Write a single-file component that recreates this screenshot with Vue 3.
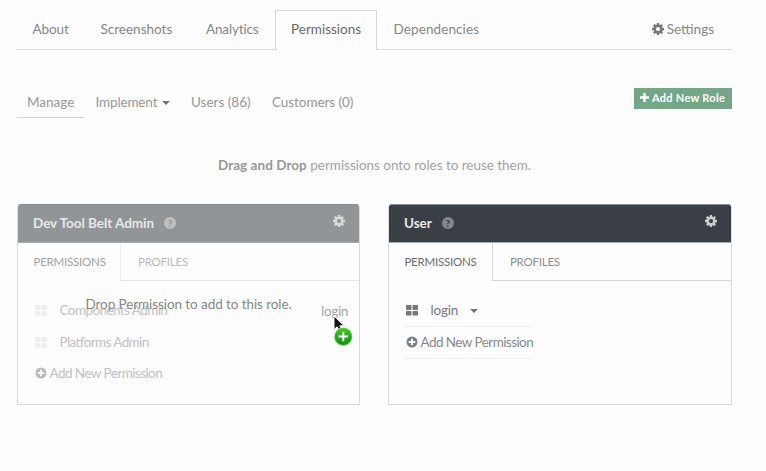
<script setup>
import { h } from 'vue'

const cogPath = 'M1024 896q0-106-75-181t-181-75-181 75-75 181 75 181 181 75 181-75 75-181zm512-109v222q0 12-8 23t-20 13l-185 28q-19 54-39 91 35 50 107 138 10 12 10 25t-9 23q-27 37-99 108t-94 71q-12 0-26-9l-138-108q-44 23-91 38-16 136-29 186-7 28-36 28h-222q-14 0-24.500-8.500t-11.500-21.500l-28-184q-49-16-90-37l-141 107q-10 9-25 9-14 0-25-11-126-114-165-168-7-10-7-23 0-12 8-23 15-21 51-66.500t54-70.500q-27-50-41-99l-183-27q-13-2-21-12.500t-8-23.500v-222q0-12 8-23t19-13l186-28q14-46 39-92-40-57-107-138-10-12-10-24 0-10 9-23 26-36 98.500-107.500t94.500-71.500q13 0 26 10l138 107q44-23 91-38 16-136 29-186 7-28 36-28h222q14 0 24.500 8.500t11.500 21.500l28 184q49 16 90 37l142-107q9-9 24-9 13 0 25 10 129 119 165 170 7 8 7 22 0 12-8 23-15 21-51 66.500t-54 70.500q26 50 41 98l183 28q13 2 21 12.500t8 23.500z'

const svg = (viewBox, d) => () =>
  h('svg', { viewBox, fill: 'currentColor', 'aria-hidden': 'true' }, [h('path', { d, 'fill-rule': 'evenodd' })])

const Cog = svg('0 128 1536 1536', cogPath)
const Plus = svg('0 0 9 9', 'M3.300 0h2.400v3.300H9v2.400H5.700V9H3.300V5.700H0V3.300h3.300z')
const PlusCircle = svg('0 0 12 12', 'M6 .5a5.500 5.500 0 1 0 0 11a5.500 5.500 0 0 0 0-11zM5.100 2.800h1.800v2.300h2.300v1.800H6.900v2.300H5.100V6.900H2.800V5.100h2.300z')
const Grid = svg('0 0 12 11', 'M.7 0h4.100q.7 0 .7.700v3.600q0 .7-.7.700H.7Q0 5 0 4.300V.7Q0 0 .7 0zM7.200 0h4.100q.7 0 .7.700v3.600q0 .7-.7.700H7.200q-.7 0-.7-.7V.7q0-.7.7-.7zM.7 6h4.100q.7 0 .7.700v3.100q0 .7-.7.700H.7q-.7 0-.7-.7V6.700Q0 6 .7 6zM7.200 6h4.100q.7 0 .7.700v3.100q0 .7-.7.700H7.200q-.7 0-.7-.7V6.700q0-.7.7-.7z')

const tabs = [
  { key: 'about', label: 'About' },
  { key: 'screens', label: 'Screenshots' },
  { key: 'analytics', label: 'Analytics' },
  { key: 'permissions', label: 'Permissions', active: true },
  { key: 'dependencies', label: 'Dependencies' },
]

const roles = [
  { key: 'admin', name: 'Dev Tool Belt Admin', items: ['Components Admin', 'Platforms Admin'], dropping: true },
  { key: 'user', name: 'User', items: ['login'], dropping: false },
]
</script>

<template>
  <main class="page">
    <nav class="tabs">
      <a v-for="t in tabs" :key="t.key" class="tab" :class="[t.key, { active: t.active }]"><span>{{ t.label }}</span></a>
      <a class="settings"><Cog class="cog" /><span>Settings</span></a>
    </nav>

    <div class="toolbar">
      <a class="sub manage"><span>Manage</span></a>
      <a class="sub implement"><span>Implement</span><i class="caret" /></a>
      <a class="sub users"><span>Users (86)</span></a>
      <a class="sub customers"><span>Customers (0)</span></a>
      <button class="add-role"><Plus class="plus" /><span>Add New Role</span></button>
    </div>

    <p class="hint"><b>Drag and Drop</b> <span>permissions onto roles to reuse them.</span></p>

    <div class="roles">
      <section v-for="r in roles" :key="r.key" class="role" :class="r.key">
        <header>
          <h2>{{ r.name }}</h2>
          <i class="help">?</i>
          <Cog class="cog" />
        </header>
        <div class="role-tabs">
          <span class="current"><span>PERMISSIONS</span></span>
          <span class="other"><span>PROFILES</span></span>
        </div>
        <ul>
          <li v-for="i in r.items" :key="i">
            <Grid class="grid" /><span class="name">{{ i }}</span><i v-if="!r.dropping" class="caret" />
          </li>
          <li class="add"><PlusCircle class="circle" /><span class="add-label">Add New Permission</span></li>
        </ul>
        <div v-if="r.dropping" class="drop">Drop Permission to add to this role.</div>
        <div v-if="r.dropping" class="dragged">
          <span>login</span>
          <svg class="pointer" viewBox="0 0 30 36" aria-hidden="true">
            <defs>
              <linearGradient id="badge" x1="0" y1="0" x2="0" y2="1">
                <stop offset="0" stop-color="#52c437" />
                <stop offset=".5" stop-color="#25ad17" />
                <stop offset="1" stop-color="#08930a" />
              </linearGradient>
            </defs>
            <path d="M4 2v13.500l3.200-2.700 2 4.200 2.700-1.200-2-4h4.300z" fill="#111" stroke="#fff" stroke-width="1" />
            <circle cx="13.300" cy="23.400" r="9.200" fill="#000" opacity=".18" />
            <circle cx="13.300" cy="22.500" r="9" fill="url(#badge)" stroke="#e4f1e1" stroke-width=".6" />
            <path d="M13.300 17.800v9.400M8.600 22.500H18" stroke="#fff" stroke-width="2" />
          </svg>
        </div>
      </section>
    </div>
  </main>
</template>

<style>
body { background: #fdfdfd; }
</style>

<style scoped>
* { box-sizing: border-box; }
svg, .caret, .help { flex: none; }
.page {
  width: 766px;
  height: 471px;
  padding: 10px 34px 0 17px;
  overflow: hidden;
  font-family: Lato, "Liberation Sans", sans-serif;
  font-size: 13.5px;
  line-height: 18px;
  color: #858787;
  white-space: nowrap;
}
.tabs { display: flex; height: 40px; border-bottom: 1px solid #dcdedd; }
.tab { flex: none; height: 40px; padding: 10px 0 0 16px; }
.about { width: 68px; padding-left: 15.500px; letter-spacing: -.1px; }
.screens { width: 105px; padding-left: 15.500px; }
.analytics { width: 85px; letter-spacing: -.15px; }
.tab.permissions { width: 102px; }
.dependencies { width: 120px; padding-left: 16.500px; letter-spacing: .1px; }
.tab.active { background: #fdfdfd; border: 1px solid #d7d9d8; border-bottom: 0; padding: 9px 0 0 15px; color: #666969; }
.settings { display: flex; margin-left: auto; padding: 10px 18px 0 0; }
.settings .cog { width: 12px; height: 12px; margin: 3px 3px 0 0; color: #777979; }
.toolbar { display: flex; height: 30px; margin-top: 38px; color: #969898; }
.sub { flex: none; padding: 5px 0 0 10px; }
.manage { width: 67px; height: 30px; border-bottom: 1px solid #ccd0ce; }
.implement { display: flex; width: 97px; padding-left: 11.500px; }
.implement span { letter-spacing: -.15px; }
.users { width: 81px; }
.customers { width: 110px; letter-spacing: -.07px; }
.caret { width: 0; height: 0; border: 4px solid transparent; border-top-color: #777; border-bottom: 0; }
.implement .caret { margin: 8px 0 0 5px; }
.add-role {
  display: flex; width: 98px; height: 21px; margin-left: auto; padding: 0 0 0 6px;
  border: 0; background: #74a787; color: #fff;
  font: 700 11px/19px Lato, sans-serif; letter-spacing: .28px;
}
.plus { width: 9px; height: 9px; margin: 5px 3px 0 0; }
.hint { margin: 38px 0 0; padding-left: 201px; color: #a1a3a4; }
.hint b { color: #969899; letter-spacing: .05px; }
.hint span { letter-spacing: -.03px; }
.roles { display: flex; gap: 29px; margin-top: 30px; }
.role { position: relative; flex: none; width: 343px; height: 201px; border: 1px solid #d9dbdb; border-radius: 4px 4px 0 0; }
.role.admin { background: #fcfdfc; }
.role.user { margin-left: -.6px; width: 343.500px; }
.role header {
  display: flex; height: 39px; margin: -1px 0 0; padding: 9px 14px 0 15px;
  border-top: 1px solid #898d90; border-bottom: 1px solid #a9acae; border-radius: 3px 3px 0 0;
  background: #3a3e45; color: #c9cbce;
}
.admin header { background: #929597; color: #d8dada; }
.role h2 { margin: 0; font-size: 13.500px; line-height: 18px; font-weight: 700; color: #e6e7e8; }
.admin h2 { letter-spacing: -.05px; }
.user h2 { margin-left: -.5px; }
.help {
  width: 12px; height: 12px; margin: 3px 0 0 10px; border-radius: 50%;
  background: #85888b; color: #3a3e45; font: 900 10px/12px Lato, sans-serif; text-align: center;
}
.admin .help { background: #bec0c1; color: #8d9092; }
.role header .cog { width: 12px; height: 12px; margin: 1px 0 0 auto; }
.role-tabs { display: flex; height: 38px; font-size: 11.500px; letter-spacing: -.22px; border-bottom: 1px solid #d5d7d6; color: #8d8f90; }
.current { flex: none; width: 103px; height: 38px; padding: 10px 0 0 15.500px; border-right: 1px solid #d9dbda; background: #fdfdfd; color: #6b6d6e; }
.user .current { width: 103.500px; padding-left: 15px; }
.other { padding: 10px 0 0 17px; }
.admin .role-tabs { border-color: #e7e9e8; color: #b9bbba; }
.admin .current { width: 103px; border-color: #ebedec; color: #a1a3a3; background: #fcfdfc; }
ul { width: 144px; margin: 0; padding: 14px 0 0 15px; list-style: none; }
li { display: flex; height: 32px; padding: 6px 0 0 2px; border-bottom: 1px solid #f0f2f1; color: #777a7b; }
li.add { color: #858b91; padding-left: 1px; }
.user li.add { padding-left: .6px; }
.admin li { height: 31.500px; border-color: transparent; color: #c0c2c4; }
.grid { width: 12px; height: 11px; margin: 4px 12px 0 0; color: #777; }
.admin .grid { color: #eceeed; }
.admin .name { letter-spacing: -.6px; margin-left: .5px; }
.admin li:first-child .name { letter-spacing: -.58px; }
.user .name { letter-spacing: -.15px; }
.name + .caret { margin: 8px 0 0 12px; }
.circle { width: 12px; height: 12px; margin: 3px 2.500px 0 1px; color: #77808a; }
.add-label { letter-spacing: -.56px; }
.admin .circle { color: #b7babc; }
.drop { position: absolute; left: 67.500px; top: 90px; color: #858887; letter-spacing: -.08px; }
.dragged { position: absolute; left: 303px; top: 97px; color: #a4a6a5; letter-spacing: -.3px; }
.pointer { position: absolute; left: 9px; top: 12px; width: 30px; height: 36px; }
</style>
